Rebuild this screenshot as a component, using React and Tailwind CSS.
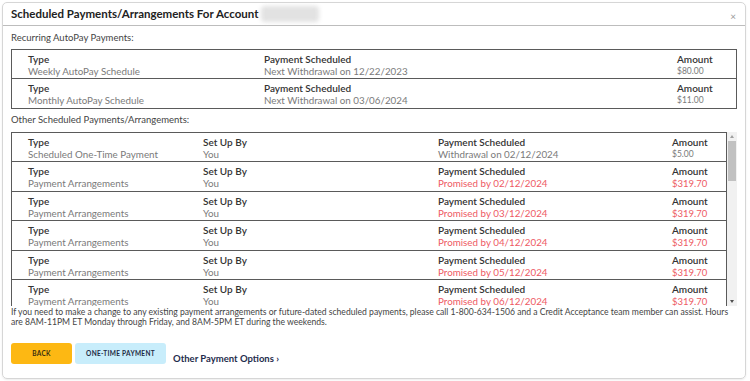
import React from 'react'

const font = { fontFamily: 'Lato, "Liberation Sans", sans-serif' }

const autopay = [
  { type: 'Weekly AutoPay Schedule', when: 'Next Withdrawal on 12/22/2023', amount: '$80.00' },
  { type: 'Monthly AutoPay Schedule', when: 'Next Withdrawal on 03/06/2024', amount: '$11.00' },
]

const months = ['02', '03', '04', '05', '06', '07', '08', '09', '10', '11', '12']
const arrangements = [
  { type: 'Scheduled One-Time Payment', by: 'You', when: 'Withdrawal on 02/12/2024', amount: '$5.00', promised: false },
  ...months.map((m) => ({ type: 'Payment Arrangements', by: 'You', when: `Promised by ${m}/12/2024`, amount: '$319.70', promised: true })),
  ...['01', '02', '03', '04', '05', '06', '07', '08', '09', '10', '11', '12'].map((m) => ({
    type: 'Payment Arrangements', by: 'You', when: `Promised by ${m}/12/2025`, amount: '$319.70', promised: true,
  })),
]

export default function App() {
  return (
    <div className="w-[750px] h-[381px] bg-white pl-[2px] pt-[2px]" style={font}>
      <div className="w-[744px] h-[377px] border border-[#d6d6d6] rounded-[5px] shadow-[0_1px_2px_rgba(0,0,0,0.08)] flex flex-col">
        {/* title bar */}
        <div className="h-[23px] border-b border-[#bdbdbd] flex items-center justify-between pl-[8px] pr-[9px]">
          <div className="flex items-center gap-[3px]">
            <span className="text-[11.5px] font-bold text-[#222] leading-none">Scheduled Payments/Arrangements For Account</span>
            <span className="w-[58px] h-[16px] bg-[#e2e2e2] blur-[2px] rounded-sm" />
          </div>
          <span className="text-[10px] text-[#999] leading-none mt-[4px]">×</span>
        </div>

        <div className="px-[8px] flex flex-col">
          <div className="mt-[6px] h-[12px] text-[9.5px] text-[#444] leading-[12px]">Recurring AutoPay Payments:</div>

          {/* autopay table */}
          <div className="mt-[5px] w-[726px] border border-[#5a5a5a] divide-y divide-[#5a5a5a]">
            {autopay.map((r) => (
              <div key={r.type} className="h-[29px] pl-[16px] pt-[3px] grid grid-cols-[236px_413px_1fr]">
                <div>
                  <div className="text-[10px] leading-[12px] font-semibold text-[#333]">Type</div>
                  <div className="text-[9.8px] leading-[13px] text-[#7a7a7a]">{r.type}</div>
                </div>
                <div>
                  <div className="text-[10px] leading-[12px] font-semibold text-[#333]">Payment Scheduled</div>
                  <div className="text-[9.8px] leading-[13px] text-[#7a7a7a]">{r.when}</div>
                </div>
                <div>
                  <div className="text-[10px] leading-[12px] font-semibold text-[#333]">Amount</div>
                  <div className="text-[8.5px] leading-[13px] text-[#7a7a7a]">{r.amount}</div>
                </div>
              </div>
            ))}
          </div>

          <div className="mt-[5px] h-[12px] text-[9.5px] text-[#444] leading-[12px]">Other Scheduled Payments/Arrangements:</div>

          {/* scheduled list */}
          <div className="mt-[6px] w-[726px] h-[174px] flex">
            <div className="w-[716px] overflow-y-scroll [scrollbar-width:none]">
              {arrangements.map((r, i) => (
                <div
                  key={i}
                  className="h-[29.4px] border-x border-t border-[#5a5a5a] pl-[16px] pt-[3px] grid grid-cols-[175px_235px_234px_1fr]"
                >
                  <div>
                    <div className="text-[10px] leading-[12px] font-semibold text-[#333]">Type</div>
                    <div className="text-[9.8px] leading-[13px] text-[#7a7a7a]">{r.type}</div>
                  </div>
                  <div>
                    <div className="text-[10px] leading-[12px] font-semibold text-[#333]">Set Up By</div>
                    <div className="text-[9.8px] leading-[13px] text-[#7a7a7a]">{r.by}</div>
                  </div>
                  <div>
                    <div className="text-[10px] leading-[12px] font-semibold text-[#333]">Payment Scheduled</div>
                    <div className={`text-[9.8px] leading-[13px] ${r.promised ? 'text-[#ee5a64]' : 'text-[#7a7a7a]'}`}>{r.when}</div>
                  </div>
                  <div>
                    <div className="text-[10px] leading-[12px] font-semibold text-[#333]">Amount</div>
                    <div className={`leading-[13px] ${r.promised ? 'text-[9.5px] text-[#ee5a64]' : 'text-[8.5px] text-[#7a7a7a]'}`}>{r.amount}</div>
                  </div>
                </div>
              ))}
            </div>
            {/* scrollbar */}
            <div className="w-[10px] bg-[#f1f1f1] flex flex-col items-center">
              <div className="h-[9px] flex items-center justify-center">
                <div className="w-0 h-0 border-x-[2.5px] border-x-transparent border-b-[3px] border-b-[#a0a0a0]" />
              </div>
              <div className="w-[8px] h-[40px] bg-[#c1c1c1]" />
              <div className="flex-1" />
              <div className="h-[9px] flex items-center justify-center">
                <div className="w-0 h-0 border-x-[2.5px] border-x-transparent border-t-[3px] border-t-[#505050]" />
              </div>
            </div>
          </div>

          <p className="mt-[1px] text-[8.6px] leading-[10px] text-[#444] whitespace-nowrap">
            If you need to make a change to any existing payment arrangements or future-dated scheduled payments, please call 1-800-634-1506 and a Credit Acceptance team member can assist. Hours
            <br />
            are 8AM-11PM ET Monday through Friday, and 8AM-5PM ET during the weekends.
          </p>

          <div className="mt-[16px] flex items-end gap-[3px]">
            <button className="w-[61px] h-[21px] rounded-[3px] bg-[#fdb813] text-[6.5px] font-bold tracking-[0.3px] text-[#3a2f10] flex items-center justify-center">
              BACK
            </button>
            <button className="w-[91px] h-[21px] rounded-[3px] bg-[#c8edfb] text-[6.5px] font-bold tracking-[0.3px] text-[#1d2a44] flex items-center justify-center">
              ONE-TIME PAYMENT
            </button>
            <a className="ml-[4px] mb-[-1px] text-[9.5px] font-bold text-[#1f2d4d] leading-[12px]">Other Payment Options ›</a>
          </div>
        </div>
      </div>
    </div>
  )
}
